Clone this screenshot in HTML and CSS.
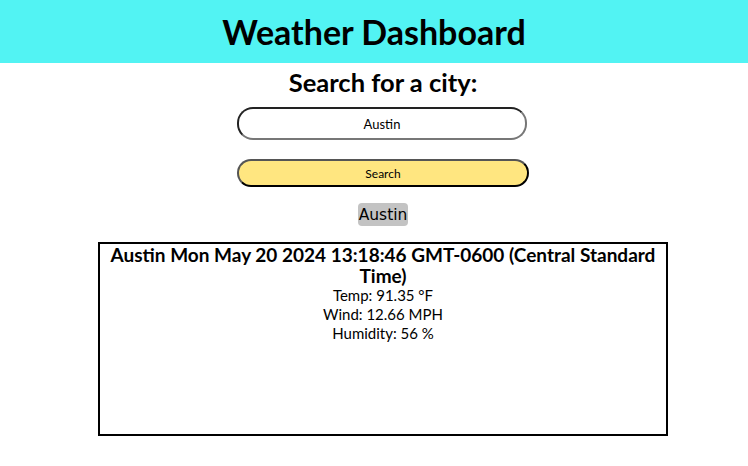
FILE: index.html
```html
<!DOCTYPE html>
<html lang="en">
<head>
<meta charset="utf-8">
<title>Weather Dashboard</title>
<link rel="stylesheet" href="styles.css">
</head>
<body>
<header class="header">
  <h1 class="title">Weather Dashboard</h1>
</header>
<main class="main">
  <section class="search">
    <h2 class="search-title">Search for a city:</h2>
    <input class="search-input" type="text" value="Austin">
    <button class="search-btn" type="button">Search</button>
    <div class="history">
      <button class="history-btn" type="button">Austin</button>
    </div>
  </section>
  <section class="card">
    <h3 class="card-title">Austin Mon May 20 2024 13:18:46 GMT-0600 (Central Standard Time)</h3>
    <p class="card-line">Temp: 91.35 °F</p>
    <p class="card-line">Wind: 12.66 MPH</p>
    <p class="card-line">Humidity: 56 %</p>
  </section>
</main>
</body>
</html>
```
FILE: styles.css
```css
* { box-sizing: border-box; }
body {
  margin: 0;
  font-family: Lato, "Open Sans", sans-serif;
  color: #000;
  background: #fff;
}
.header {
  background: #52f3f3;
  height: 63px;
  display: flex;
  align-items: center;
  justify-content: center;
}
.title {
  margin: 0;
  font-size: 34px;
  font-weight: 700;
}
.main {
  display: flex;
  flex-direction: column;
  align-items: center;
  padding-left: 18px;
}
.search {
  display: flex;
  flex-direction: column;
  align-items: center;
}
.search-title {
  margin: 4px 0 10px;
  font-size: 25.5px;
  line-height: 30px;
  font-weight: 700;
}
.search-input {
  width: 290px;
  height: 33px;
  border-radius: 16px;
  border: 2px solid;
  border-color: #222 #777 #777 #222;
  text-align: center;
  font-family: Lato, sans-serif;
  font-size: 13px;
  color: #000;
  margin-left: -2px;
}
.search-btn {
  margin-top: 19px;
  width: 292px;
  height: 28px;
  border-radius: 14px;
  border: 2px solid #000;
  border-top-color: #555;
  border-left-color: #555;
  background: #ffe680;
  color: #000;
  font-family: Lato, sans-serif;
  font-size: 12px;
}
.history {
  margin-top: 16px;
}
.history-btn {
  background: #c3c3c3;
  color: #000;
  border: none;
  border-radius: 4px;
  padding: 2px 1px;
  height: 23px;
  font-family: "DejaVu Sans", sans-serif;
  font-size: 15.5px;
}
.card {
  margin-top: 16px;
  width: 570px;
  height: 194px;
  border: 2px solid #000;
  text-align: center;
}
.card-title {
  margin: 0;
  font-size: 19px;
  font-weight: 700;
  line-height: 21px;
}
.card-line {
  margin: 0;
  font-size: 15px;
  line-height: 19px;
}
```
